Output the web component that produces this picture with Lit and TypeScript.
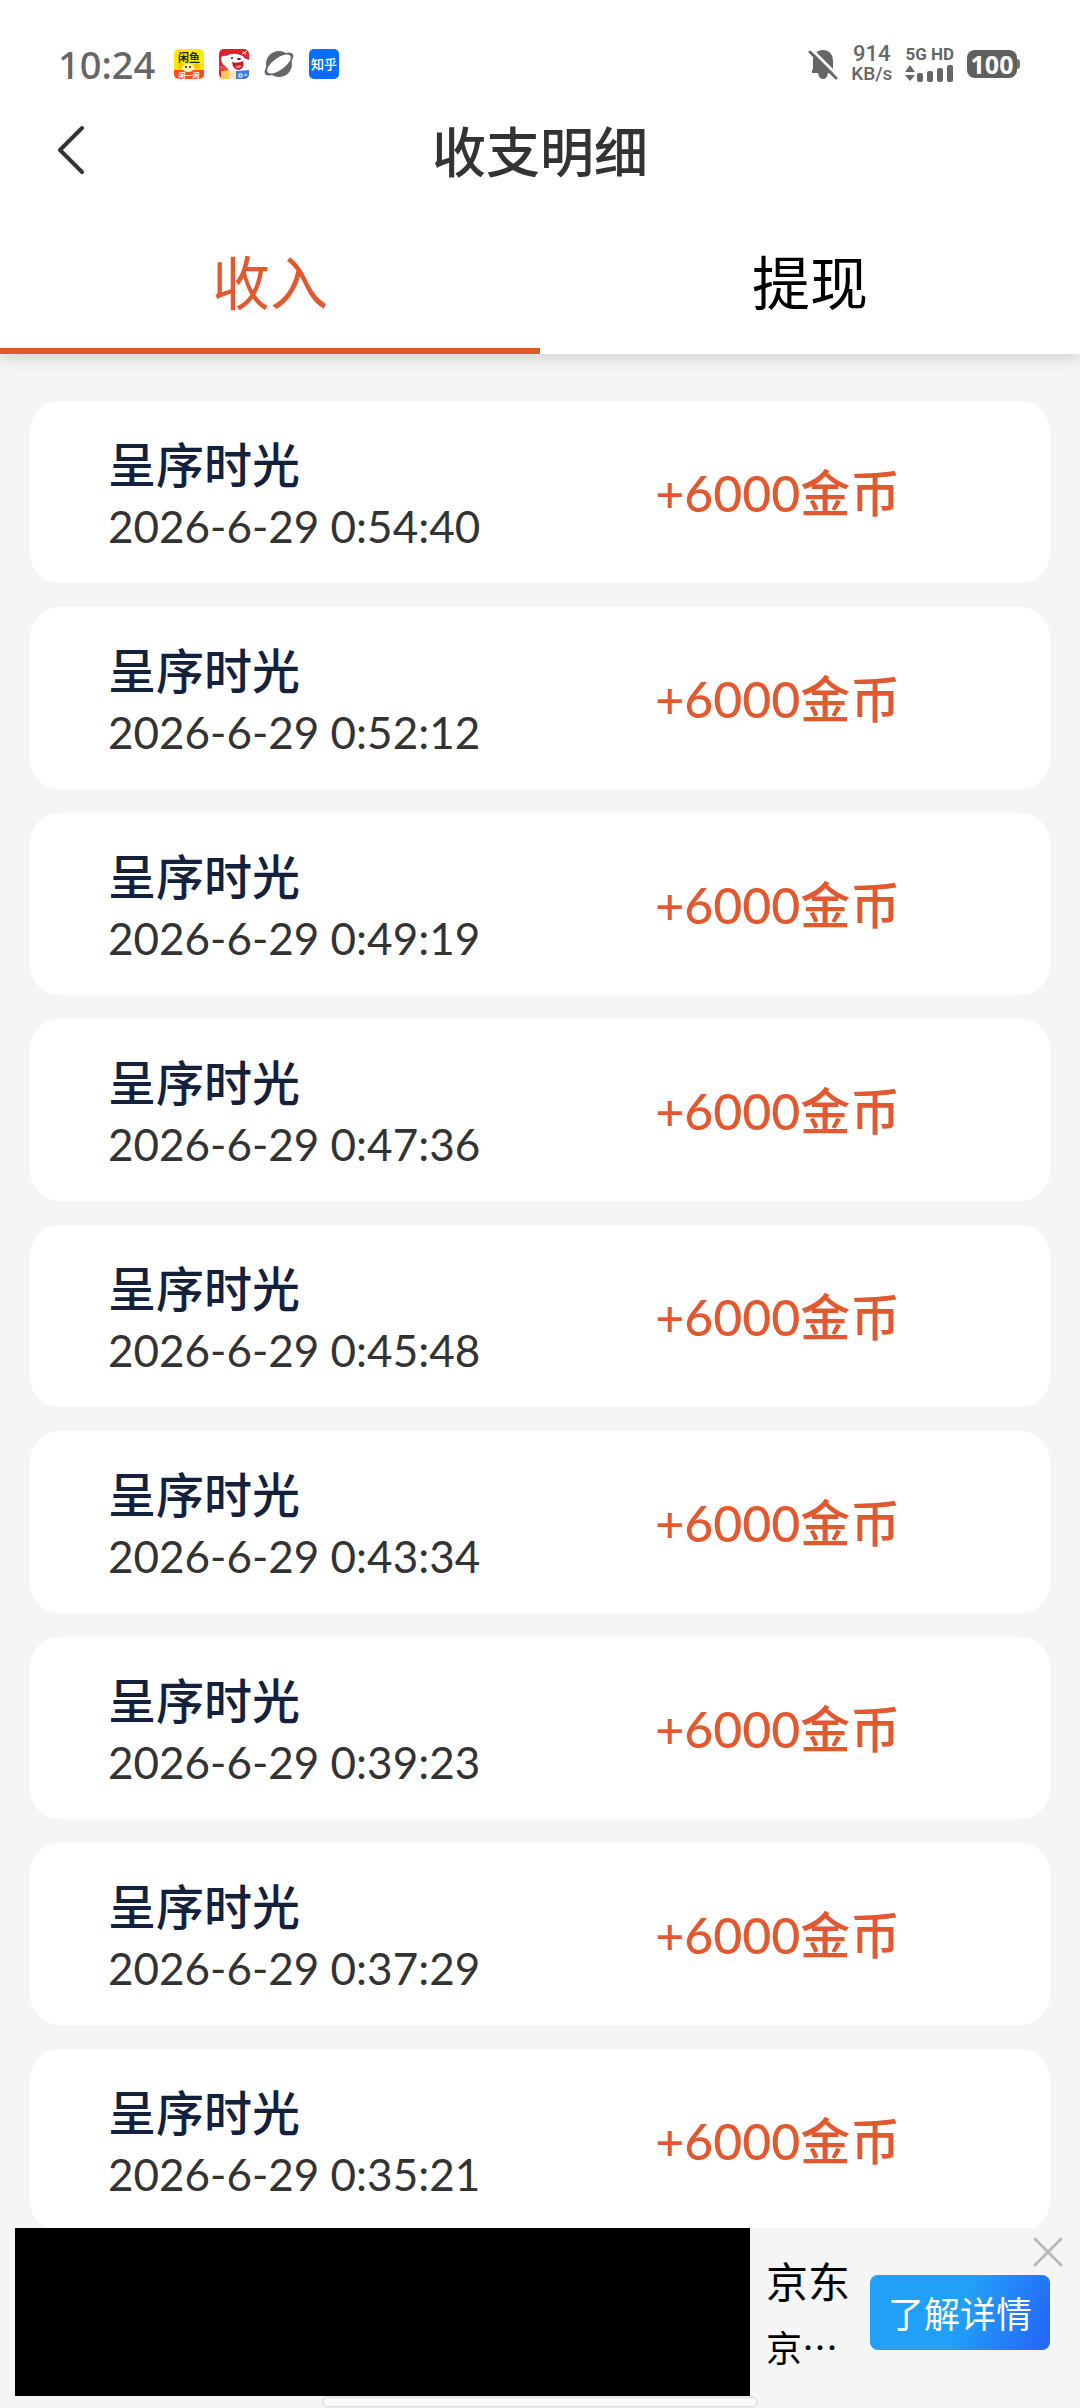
import { html, css, svg, LitElement } from 'lit';
import { customElement, property, state } from 'lit/decorators.js';
import { classMap } from 'lit/directives/class-map.js';

interface IncomeRecord {
  name: string;
  time: string;
  amount: string;
}

const TIMES = [
  '0:54:40',
  '0:52:12',
  '0:49:19',
  '0:47:36',
  '0:45:48',
  '0:43:34',
  '0:39:23',
  '0:37:29',
  '0:35:21',
];

const RECORDS: IncomeRecord[] = TIMES.map((t) => ({
  name: '呈序时光',
  time: `2026-6-29 ${t}`,
  amount: '+6000金币',
}));

@customElement('status-bar')
export class StatusBar extends LitElement {
  static styles = css`
    :host {
      display: flex;
      align-items: center;
      justify-content: space-between;
      height: 72px;
      padding: 28px 60px 0 58px;
      color: #666;
      font-weight: 500;
    }
    .left { display: flex; align-items: center; gap: 15px; }
    .right { display: flex; align-items: center; gap: 13px; }
    .clock { font-family: "Noto Sans", sans-serif; font-size: 38px; line-height: 40px; margin-right: 4px; }
    svg { display: block; }
    .app { width: 30px; height: 30px; }
    .app text { font-family: "Noto Sans CJK SC", sans-serif; }
    .speed { display: flex; flex-direction: column; align-items: center; font-family: Roboto, sans-serif; }
    .speed-num { font-size: 22px; line-height: 20px; }
    .speed-unit { font-size: 19px; line-height: 20px; }
    .network { display: flex; flex-direction: column; gap: 4px; }
    .network-type { font-family: Roboto, sans-serif; font-size: 17px; font-weight: 700; line-height: 14px; }
    .battery { display: flex; align-items: center; }
    .battery-body {
      width: 50px;
      height: 28px;
      border-radius: 8px;
      background: #5f5f5f;
      color: #fff;
      font-family: "Noto Sans", sans-serif;
      font-size: 25px;
      font-weight: 700;
      line-height: 28px;
      text-align: center;
    }
    .battery-tip { width: 3px; height: 10px; border-radius: 0 3px 3px 0; background: #777; }
  `;

  render() {
    return html`
      <div class="left">
        <span class="clock">10:24</span>
        <svg class="app" viewBox="0 0 30 30">
          <defs><clipPath id="a"><rect width="30" height="30" rx="5" /></clipPath></defs>
          <g clip-path="url(#a)">
            <rect width="30" height="30" fill="#ffeb00" />
            <circle cx="7" cy="17" r="3" fill="#ffc400" />
            <circle cx="23" cy="17" r="3" fill="#ffc400" />
            <rect y="21" width="30" height="9" fill="#ff4a1c" />
            <ellipse cx="14" cy="19" rx="6" ry="4" fill="#fff3b0" />
            <circle cx="12" cy="18" r="1" fill="#222" />
            <circle cx="16" cy="18" r="1" fill="#222" />
            <text x="15" y="13" font-size="11" font-weight="700" text-anchor="middle" fill="#222">闲鱼</text>
            <text x="15" y="29" font-size="7" font-weight="700" text-anchor="middle" fill="#fff">闲一闲</text>
          </g>
        </svg>
        <svg class="app" viewBox="0 0 30 30">
          <defs><clipPath id="b"><rect width="30" height="30" rx="5" /></clipPath></defs>
          <g clip-path="url(#b)">
            <rect width="30" height="30" fill="#e0202a" />
            <path d="M2 9q1-3 5-2q7-4 14-1q4 1 4 3l5 2v11H8L6 17q-4-3-4-8z" fill="#fff" />
            <path d="M0 17l5-1 5 5H0z" fill="#e5484d" />
            <path d="M13 13q5 2 11-1q2 7-4 9q-6 0-7-8z" fill="#c91a24" />
            <path d="M16 18q4-3 7-1q-3 4-7 1z" fill="#f58a8d" />
            <circle cx="13" cy="9" r="1" fill="#222" />
            <ellipse cx="20" cy="10" rx="2" ry="1" fill="#222" />
            <path d="M23 5l5-3M24 2l3 4" stroke="#fff" stroke-width="1" />
            <path d="M2 22l8-1v9H2z" fill="#ffc45a" />
            <path d="M10 22h7v8h-7z" fill="#ffe6c0" />
            <path d="M17 22l13-1v9H17z" fill="#3f7fe0" />
            <path d="M20 25h3v3h-3zM25 26h3" stroke="#fff" stroke-width="1" fill="none" />
          </g>
        </svg>
        <svg class="app" viewBox="0 0 30 30">
          <circle cx="15" cy="15" r="13" fill="#666" />
          <ellipse cx="15" cy="15" rx="17" ry="7" fill="#666" transform="rotate(-36 15 15)" />
          <ellipse cx="15" cy="15" rx="14" ry="6" fill="#fff" transform="rotate(-36 15 15)" />
        </svg>
        <svg class="app" viewBox="0 0 30 30">
          <rect width="30" height="30" rx="5" fill="#0a6cff" />
          <text x="15" y="20" font-size="13" font-weight="500" text-anchor="middle" fill="#fff">知乎</text>
        </svg>
      </div>
      <div class="right">
        <svg width="30" height="32" viewBox="0 0 30 32">
          <path d="M4 25V22l1-1V13C5 6 9 2 15 2s10 4 10 11v8l3 4z" fill="#666" />
          <path d="M10 25h10q-1 6-5 6t-5-6z" fill="#666" />
          <path d="M3 1L30 28" stroke="#fff" stroke-width="3" />
          <path d="M2 4L28 30" stroke="#666" stroke-width="3" stroke-linecap="round" />
        </svg>
        <div class="speed">
          <span class="speed-num">914</span>
          <span class="speed-unit">KB/s</span>
        </div>
        <div class="network">
          <span class="network-type">5G HD</span>
          <svg width="48" height="17" viewBox="0 0 48 17" fill="#666">
            <path d="M5 0l5 7H0zM5 16l5-6H0z" />
            ${[9, 11, 14, 17].map((h, i) => svg`<rect x=${12 + i * 10} y=${17 - h} width="6" height=${h} rx="2" />`)}
          </svg>
        </div>
        <div class="battery">
          <div class="battery-body">100</div>
          <div class="battery-tip"></div>
        </div>
      </div>
    `;
  }
}

@customElement('income-row')
export class IncomeRow extends LitElement {
  static styles = css`
    :host {
      display: grid;
      grid-template-columns: 7fr 4fr;
      align-items: center;
      padding: 31px 82px 29px 78px;
      border-radius: 30px;
      background: #fff;
    }
    .name { color: #14213d; font-size: 48px; font-weight: 500; line-height: 66px; }
    .time { color: #333; font-size: 44px; line-height: 56px; }
    .amount { color: #e2592f; font-size: 50px; font-weight: 500; line-height: 66px; white-space: nowrap; }
  `;

  @property({ attribute: false }) record!: IncomeRecord;

  render() {
    return html`
      <div>
        <div class="name">${this.record.name}</div>
        <div class="time">${this.record.time}</div>
      </div>
      <div class="amount">${this.record.amount}</div>
    `;
  }
}

@customElement('ad-banner')
export class AdBanner extends LitElement {
  static styles = css`
    :host {
      position: relative;
      display: flex;
      align-items: stretch;
      padding: 0 30px 12px 15px;
      background: #f5f5f5;
    }
    .picture { flex: 1; height: 168px; background: #000; }
    .texts {
      display: flex;
      flex-direction: column;
      justify-content: center;
      gap: 16px;
      box-sizing: border-box;
      width: 120px;
      padding: 4px 0 0 16px;
      color: #000;
    }
    .brand { font-size: 42px; line-height: 52px; }
    .desc { font-size: 36px; line-height: 48px; }
    .action {
      align-self: center;
      width: 180px;
      height: 75px;
      padding: 0;
      border: 0;
      border-radius: 8px;
      background: linear-gradient(110deg, #22a0f8 50%, #2468f8 96%);
      color: #fff;
      font: inherit;
      font-size: 36px;
    }
    .close { position: absolute; top: 8px; right: 16px; padding: 0; border: 0; background: none; }
    .close svg { display: block; }
    .home-bar {
      position: absolute;
      bottom: 2px;
      left: 30%;
      right: 30%;
      height: 8px;
      border-radius: 5px;
      background: #fbfbfb;
      box-shadow: 0 0 3px rgba(0, 0, 0, 0.25);
    }
  `;

  render() {
    return html`
      <div class="picture"></div>
      <div class="texts">
        <span class="brand">京东</span>
        <span class="desc">京⋯</span>
      </div>
      <button class="action">了解详情</button>
      <button class="close" aria-label="关闭">
        <svg width="32" height="32" viewBox="0 0 32 32">
          <path d="M3 3l26 26M29 3L3 29" stroke="#bbb" stroke-width="3" stroke-linecap="round" />
        </svg>
      </button>
      <div class="home-bar"></div>
    `;
  }
}

@customElement('app-root')
export class AppRoot extends LitElement {
  static styles = css`
    :host {
      display: flex;
      flex-direction: column;
      height: 100vh;
      background: #f5f5f5;
      font-family: Lato, "Noto Sans CJK SC", sans-serif;
    }

    .header {
      position: relative;
      z-index: 1;
      flex: none;
      background: #fff;
      box-shadow: 0 4px 16px rgba(0, 0, 0, 0.15);
    }
    .title-bar {
      display: grid;
      grid-template-columns: 88px 1fr 88px;
      align-items: center;
      height: 100px;
    }
    .back { justify-self: end; padding: 0; border: 0; background: none; }
    .back svg { display: block; }
    h1 {
      margin: 0;
      padding-top: 6px;
      color: #333;
      font-size: 54px;
      font-weight: 500;
      line-height: 80px;
      text-align: center;
    }

    .tabs { display: flex; }
    .tab {
      flex: 1;
      height: 154px;
      padding: 12px 0 0 0;
      border: 0;
      border-bottom: 6px solid transparent;
      background: none;
      color: #000;
      font: inherit;
      font-size: 58px;
    }
    .tab.active { color: #e2592f; border-bottom-color: #e2592f; }

    .list {
      display: flex;
      flex: 1;
      flex-direction: column;
      gap: 24px;
      min-height: 0;
      padding: 47px 30px 0 30px;
      overflow-y: auto;
      scrollbar-width: none;
    }
    income-row, ad-banner { flex: none; }
  `;

  @state() private tab = '收入';

  render() {
    return html`
      <header class="header">
        <status-bar></status-bar>
        <div class="title-bar">
          <button class="back" aria-label="返回">
            <svg width="32" height="52" viewBox="0 0 32 52" fill="none">
              <path d="M26 4L4 26l22 22" stroke="#333" stroke-width="4" stroke-linecap="round" stroke-linejoin="round" />
            </svg>
          </button>
          <h1>收支明细</h1>
        </div>
        <nav class="tabs">
          ${['收入', '提现'].map((name) => html`
            <button class=${classMap({ tab: true, active: this.tab === name })} @click=${() => (this.tab = name)}>${name}</button>
          `)}
        </nav>
      </header>
      <main class="list">
        ${RECORDS.map((r) => html`<income-row .record=${r}></income-row>`)}
      </main>
      <ad-banner></ad-banner>
    `;
  }
}
